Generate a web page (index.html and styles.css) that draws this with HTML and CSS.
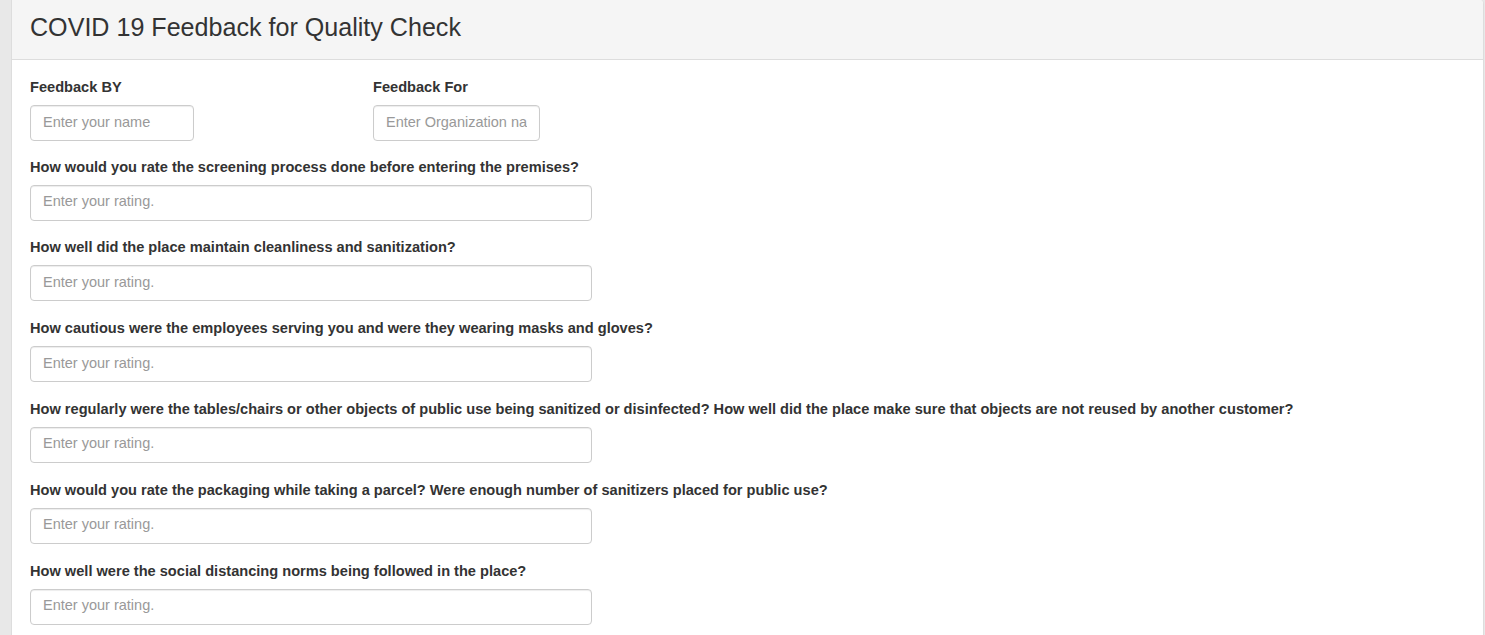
FILE: index.html
```html
<!DOCTYPE html>
<html lang="en">
<head>
<meta charset="utf-8">
<title>COVID 19 Feedback for Quality Check</title>
<link rel="stylesheet" href="styles.css">
</head>
<body>
<div class="panel">
  <div class="panel-heading">
    <h3 class="panel-title">COVID 19 Feedback for Quality Check</h3>
  </div>
  <form class="panel-body">
    <div class="row">
      <div class="form-group col-name">
        <label class="label">Feedback BY</label>
        <input class="form-control" type="text" placeholder="Enter your name">
      </div>
      <div class="form-group col-org">
        <label class="label">Feedback For</label>
        <input class="form-control" type="text" placeholder="Enter Organization name">
      </div>
    </div>
    <div class="form-group">
      <label class="label">How would you rate the screening process done before entering the premises?</label>
      <input class="form-control wide" type="text" placeholder="Enter your rating.">
    </div>
    <div class="form-group">
      <label class="label">How well did the place maintain cleanliness and sanitization?</label>
      <input class="form-control wide" type="text" placeholder="Enter your rating.">
    </div>
    <div class="form-group">
      <label class="label">How cautious were the employees serving you and were they wearing masks and gloves?</label>
      <input class="form-control wide" type="text" placeholder="Enter your rating.">
    </div>
    <div class="form-group">
      <label class="label">How regularly were the tables/chairs or other objects of public use being sanitized or disinfected? How well did the place make sure that objects are not reused by another customer?</label>
      <input class="form-control wide" type="text" placeholder="Enter your rating.">
    </div>
    <div class="form-group">
      <label class="label">How would you rate the packaging while taking a parcel? Were enough number of sanitizers placed for public use?</label>
      <input class="form-control wide" type="text" placeholder="Enter your rating.">
    </div>
    <div class="form-group">
      <label class="label">How well were the social distancing norms being followed in the place?</label>
      <input class="form-control wide" type="text" placeholder="Enter your rating.">
    </div>
  </form>
</div>
</body>
</html>
```
FILE: styles.css
```css
html, body {
  margin: 0;
  height: 635px;
  overflow: hidden;
}
body {
  background: #e8e8e8;
  font-family: "Liberation Sans", Arial, Helvetica, sans-serif;
  font-size: 14.6px;
  line-height: 20px;
  color: #333;
  padding: 0 1px 0 11px;
  box-sizing: border-box;
}
.panel {
  background: #fff;
  border: 1px solid #ddd;
  border-top: 0;
  border-radius: 0 4px 0 0;
  min-height: 700px;
}
.panel-heading {
  background: #f5f5f5;
  border-bottom: 1px solid #ddd;
  height: 59px;
  padding: 0 18px;
  display: flex;
  align-items: center;
  border-radius: 0 4px 0 0;
}
.panel-title {
  margin: 0;
  font-size: 25.1px;
  font-weight: normal;
  line-height: 30px;
  color: #333;
  padding-bottom: 6px;
}
.panel-body {
  display: block;
  padding: 17px 18px;
}
.row {
  display: flex;
  margin-bottom: 15.6px;
}
.row .form-group {
  margin-bottom: 0;
}
.col-name {
  width: 343px;
}
.col-org {
  width: 200px;
}
.form-group {
  margin-bottom: 16.8px;
}
.label {
  display: block;
  font-weight: bold;
  margin-bottom: 8px;
}
.form-control {
  display: block;
  box-sizing: border-box;
  height: 36px;
  padding: 4.5px 12px 7.5px;
  font-family: inherit;
  font-size: 14.5px;
  color: #555;
  background: #fff;
  border: 1px solid #ccc;
  border-radius: 4px;
  box-shadow: inset 0 1px 1px rgba(0,0,0,.075);
  outline: none;
}
.form-control::placeholder {
  color: #999;
}
.col-name .form-control {
  width: 164px;
}
.col-org .form-control {
  width: 167px;
}
.form-control.wide {
  width: 562px;
}
```
